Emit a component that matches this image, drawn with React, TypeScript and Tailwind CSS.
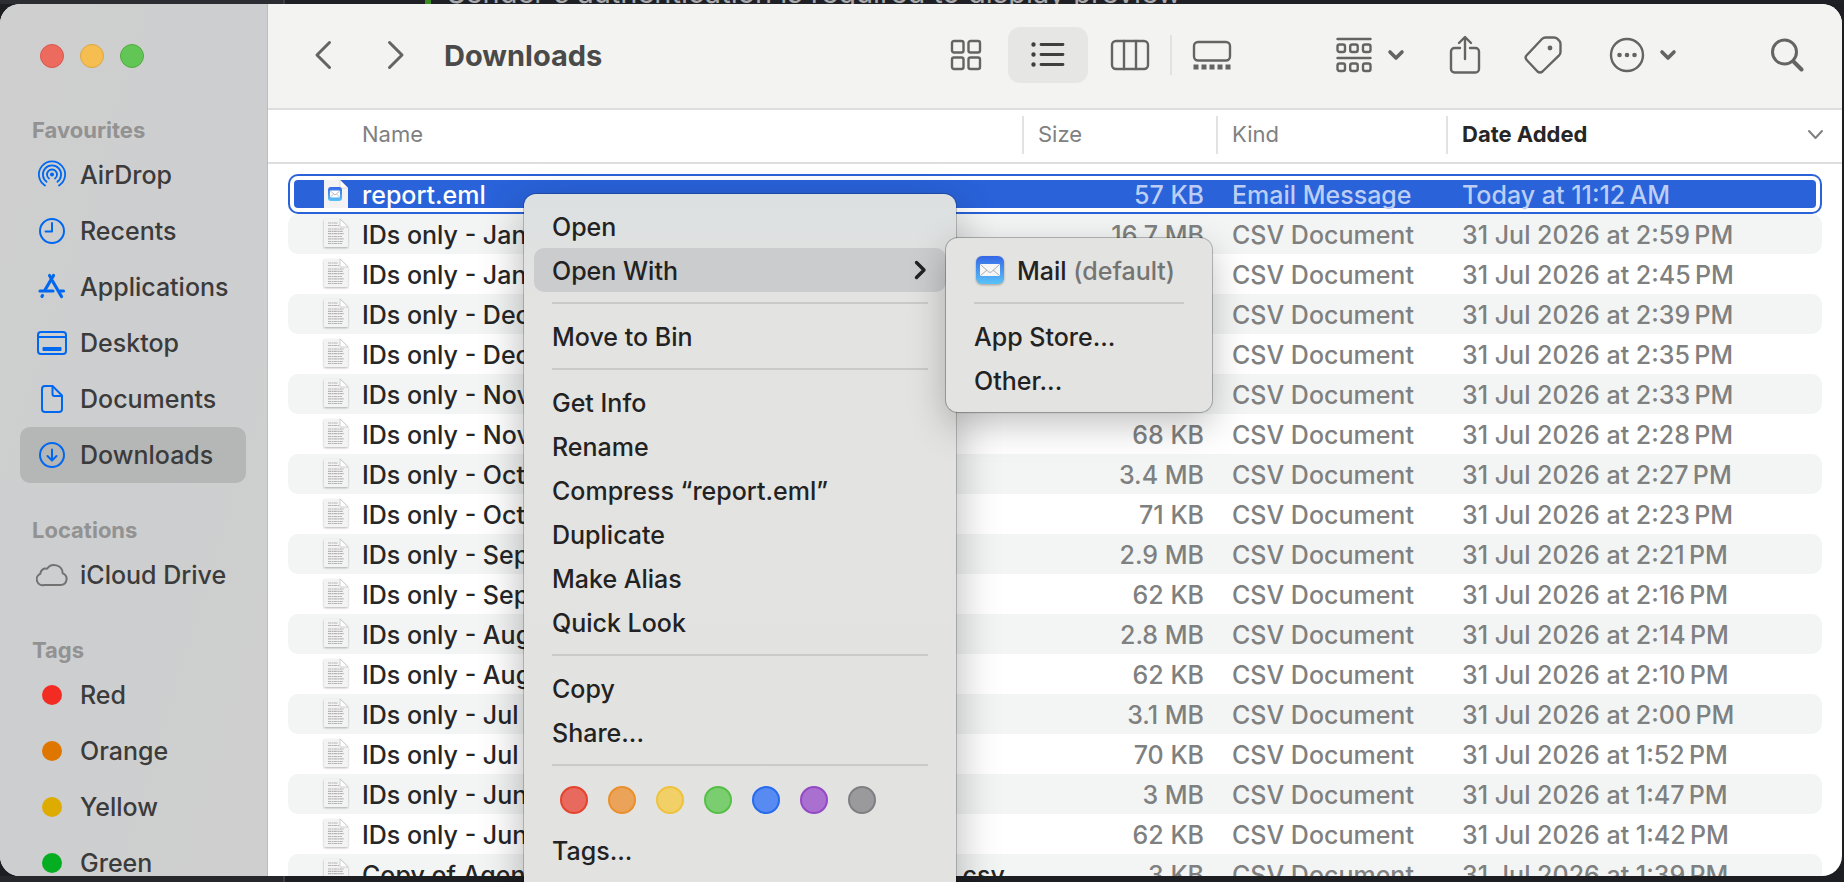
import { useState } from 'react';
import type { ReactNode } from 'react';
import clsx from 'clsx';

const CSV = 'CSV Document';

const files = [
  { name: 'report.eml', size: '57 KB', kind: 'Email Message', added: 'Today at 11:12\u202fAM' },
  { name: 'IDs only - Jan 2026.csv', size: '16.7 MB', kind: CSV, added: '31 Jul 2026 at 2:59\u202fPM' },
  { name: 'IDs only - Jan 2026 (1).csv', size: '74 KB', kind: CSV, added: '31 Jul 2026 at 2:45\u202fPM' },
  { name: 'IDs only - Dec 2025.csv', size: '3.6 MB', kind: CSV, added: '31 Jul 2026 at 2:39\u202fPM' },
  { name: 'IDs only - Dec 2025 (1).csv', size: '66 KB', kind: CSV, added: '31 Jul 2026 at 2:35\u202fPM' },
  { name: 'IDs only - Nov 2025.csv', size: '3.2 MB', kind: CSV, added: '31 Jul 2026 at 2:33\u202fPM' },
  { name: 'IDs only - Nov 2025 (1).csv', size: '68 KB', kind: CSV, added: '31 Jul 2026 at 2:28\u202fPM' },
  { name: 'IDs only - Oct 2025.csv', size: '3.4 MB', kind: CSV, added: '31 Jul 2026 at 2:27\u202fPM' },
  { name: 'IDs only - Oct 2025 (1).csv', size: '71 KB', kind: CSV, added: '31 Jul 2026 at 2:23\u202fPM' },
  { name: 'IDs only - Sep 2025.csv', size: '2.9 MB', kind: CSV, added: '31 Jul 2026 at 2:21\u202fPM' },
  { name: 'IDs only - Sep 2025 (1).csv', size: '62 KB', kind: CSV, added: '31 Jul 2026 at 2:16\u202fPM' },
  { name: 'IDs only - Aug 2025.csv', size: '2.8 MB', kind: CSV, added: '31 Jul 2026 at 2:14\u202fPM' },
  { name: 'IDs only - Aug 2025 (1).csv', size: '62 KB', kind: CSV, added: '31 Jul 2026 at 2:10\u202fPM' },
  { name: 'IDs only - Jul 2025.csv', size: '3.1 MB', kind: CSV, added: '31 Jul 2026 at 2:00\u202fPM' },
  { name: 'IDs only - Jul 2025 (1).csv', size: '70 KB', kind: CSV, added: '31 Jul 2026 at 1:52\u202fPM' },
  { name: 'IDs only - Jun 2025.csv', size: '3 MB', kind: CSV, added: '31 Jul 2026 at 1:47\u202fPM' },
  { name: 'IDs only - Jun 2025 (1).csv', size: '62 KB', kind: CSV, added: '31 Jul 2026 at 1:42\u202fPM' },
  { name: 'Copy of Agent performance report - July 2026 (1).csv', size: '3 KB', kind: CSV, added: '31 Jul 2026 at 1:39\u202fPM' },
];

const tagDots = [
  { name: 'Red', cls: 'bg-[#e8695d] border-[#e5432f]' },
  { name: 'Orange', cls: 'bg-[#eba35a] border-[#e98f2b]' },
  { name: 'Yellow', cls: 'bg-[#f1d067] border-[#eec23a]' },
  { name: 'Green', cls: 'bg-[#7ace70] border-[#56bf48]' },
  { name: 'Blue', cls: 'bg-[#588bf2] border-[#276af0]' },
  { name: 'Purple', cls: 'bg-[#aa70d0] border-[#9448c4]' },
  { name: 'Grey', cls: 'bg-[#9a9a9c] border-[#7f7f82]' },
];

function Icon({ w, h, sw = 2.4, children, className }: { w: number; h: number; sw?: number; children: ReactNode; className?: string }) {
  return (
    <svg
      width={w}
      height={h}
      viewBox={`0 0 ${w} ${h}`}
      fill="none"
      stroke="currentColor"
      strokeWidth={sw}
      strokeLinecap="round"
      strokeLinejoin="round"
      className={clsx('shrink-0', className)}
      aria-hidden="true"
    >
      {children}
    </svg>
  );
}

const AirDropIcon = () => (
  <Icon w={30} h={30} sw={1.8}>
    <circle cx="15" cy="14.5" r="2" fill="currentColor" stroke="none" />
    <path d="M12 18.5A5 5 0 1 1 18 18.5" />
    <path d="M9.6 21.8A9.1 9.1 0 1 1 20.4 21.8" />
    <path d="M8 25.6A13.1 13.1 0 1 1 22 25.6" />
  </Icon>
);

const RecentsIcon = () => (
  <Icon w={30} h={30} sw={2}>
    <circle cx="15" cy="15" r="12" />
    <path d="M15 7v8.5H8.5" />
  </Icon>
);

const ApplicationsIcon = () => (
  <Icon w={30} h={30} sw={3.2}>
    <path d="M16.5 3.5L8 18" />
    <path d="M12.5 3.5L14 6M15.5 9L24.5 24.5" />
    <path d="M3 19H16M23 19H26.5" />
    <path d="M5.5 23.5L5 24.3" />
  </Icon>
);

const DesktopIcon = () => (
  <Icon w={30} h={30} sw={2}>
    <rect x="1" y="4" width="28" height="22" rx="3" />
    <path d="M1 9h28" />
    <rect x="5.5" y="19" width="19" height="4" rx="1" fill="currentColor" stroke="none" />
  </Icon>
);

const DocumentsIcon = () => (
  <Icon w={30} h={30} sw={2}>
    <path d="M8 2h7.5L25 11.5V25a3 3 0 0 1-3 3H8a3 3 0 0 1-3-3V5a3 3 0 0 1 3-3z" />
    <path d="M15.5 2.5V10a2 2 0 0 0 2 2H25" />
  </Icon>
);

const DownloadsIcon = () => (
  <Icon w={30} h={30} sw={2}>
    <circle cx="15" cy="15" r="12" />
    <path d="M15 9.5V20M10.5 16l4.5 4.5 4.5-4.5" />
  </Icon>
);

const CloudIcon = () => (
  <Icon w={32} h={30} sw={2}>
    <path d="M8 25h16.5a6 6 0 0 0 2.2-11.6A8.6 8.6 0 0 0 11 8.8a5.2 5.2 0 0 0-6.6 5A5.9 5.9 0 0 0 8 25z" />
  </Icon>
);

function TextFileIcon() {
  return (
    <svg width="26" height="30" viewBox="0 0 26 30" className="shrink-0 drop-shadow-[0_1px_1px_rgba(0,0,0,0.3)]" aria-hidden="true">
      <path d="M2 0H17L25 8V27a1 1 0 0 1-1 1H2a1 1 0 0 1-1-1V1a1 1 0 0 1 1-1z" fill="#f3f3f3" />
      <path d="M17 0L25 8H18a1 1 0 0 1-1-1z" fill="#fff" stroke="#b5b5b5" strokeWidth="0.6" />
      <g stroke="#b4b4b4" strokeWidth="1.2" strokeDasharray="3 0.5 2 0.4">
        <path d="M5 4h10M5 6.5h11M5 10h16M5 12.3h15M5 14.6h16M5 17.5h14M5 19.8h16M5 22.5h15M5 24.5h14" />
      </g>
    </svg>
  );
}

function EmlFileIcon() {
  return (
    <svg width="26" height="28" viewBox="0 0 26 28" className="shrink-0" aria-hidden="true">
      <path d="M1 0H17L25 8V28H1z" fill="#f3f3f3" />
      <path d="M17 0L25 8H18a1 1 0 0 1-1-1z" fill="#fff" stroke="#c6c6c6" strokeWidth="0.6" />
      <rect x="5" y="7" width="14" height="14" rx="3" fill="url(#mailFill)" />
      <rect x="7" y="10.5" width="10" height="7" rx="0.8" fill="#fff" />
      <path d="M7.3 11l4.7 4 4.7-4M7.3 17.2l3.2-3.2M16.7 17.2l-3.2-3.2" fill="none" stroke="#9aa4ad" strokeWidth="0.7" />
    </svg>
  );
}

function MailIcon() {
  return (
    <svg width="30" height="30" viewBox="0 0 30 30" className="shrink-0 drop-shadow-[0_1px_1px_rgba(0,0,0,0.3)]" aria-hidden="true">
      <defs>
        <linearGradient id="mailFill" x1="0" y1="0" x2="0" y2="1">
          <stop offset="0" stopColor="#3567e6" />
          <stop offset="1" stopColor="#5ac3f8" />
        </linearGradient>
      </defs>
      <rect x="2" y="1" width="28" height="28" rx="6" fill="url(#mailFill)" />
      <rect x="6" y="9" width="20" height="12" rx="1" fill="#f6f6f6" />
      <path d="M6.5 9.5l8 7.3q1.5 1.2 3 0l8-7.3M6.5 20.5l6.5-5.5M25.5 20.5l-6.5-5.5" fill="none" stroke="#a9adb1" />
    </svg>
  );
}

function Chevron() {
  return (
    <Icon w={18} h={12} sw={3.6}>
      <path d="M3 3l6 6 6-6" />
    </Icon>
  );
}

const favourites = [
  { label: 'AirDrop', icon: <AirDropIcon /> },
  { label: 'Recents', icon: <RecentsIcon /> },
  { label: 'Applications', icon: <ApplicationsIcon /> },
  { label: 'Desktop', icon: <DesktopIcon /> },
  { label: 'Documents', icon: <DocumentsIcon /> },
  { label: 'Downloads', icon: <DownloadsIcon /> },
];

const sidebarTags = [
  { label: 'Red', cls: 'bg-[#f22c23]' },
  { label: 'Orange', cls: 'bg-[#de7600]' },
  { label: 'Yellow', cls: 'bg-[#deab00]' },
  { label: 'Green', cls: 'bg-[#05ad20]' },
];

function SidebarSection({ title, children }: { title: string; children: ReactNode }) {
  return (
    <section>
      <h2 className="h-[34px] pl-8 text-[22px] leading-[34px] font-bold text-[#929292]">{title}</h2>
      <ul>{children}</ul>
    </section>
  );
}

function SidebarItem({ label, icon, active, onClick }: { label: string; icon: ReactNode; active?: boolean; onClick?: () => void }) {
  return (
    <li className="pl-5 pr-[21px]">
      <button
        onClick={onClick}
        className={clsx('flex h-14 w-full items-center gap-3 rounded-[10px] pl-4 text-left text-[25px] text-[#3b3b3b]', active && 'bg-[#b5b6b6]')}
      >
        <span className="flex w-8 justify-center text-[#0068f0]">{icon}</span>
        <span className="pt-0.5">{label}</span>
      </button>
    </li>
  );
}

function Toolbar() {
  return (
    <header className="flex h-[106px] shrink-0 items-center border-b-2 border-[#dededd] bg-[#f3f3f1] pb-0.5 pl-[46px] pr-[38px] text-[#646463]">
      <button aria-label="Back">
        <Icon w={18} h={30} sw={3}>
          <path d="M15.5 2.5L3 15l12.5 12.5" />
        </Icon>
      </button>
      <button aria-label="Forward" className="ml-[55px]">
        <Icon w={18} h={30} sw={3}>
          <path d="M2.5 2.5L15 15 2.5 27.5" />
        </Icon>
      </button>
      <h1 className="ml-[39px] pt-px text-[29px] font-bold text-[#4a4a49]">Downloads</h1>

      <div className="ml-auto flex items-center">
        <div className="flex items-center gap-0.5">
          <button aria-label="Icon view" className="flex h-14 w-20 items-center justify-center">
            <Icon w={32} h={32}>
              <rect x="2" y="2" width="11.5" height="11.5" rx="2" />
              <rect x="18.5" y="2" width="11.5" height="11.5" rx="2" />
              <rect x="2" y="18.5" width="11.5" height="11.5" rx="2" />
              <rect x="18.5" y="18.5" width="11.5" height="11.5" rx="2" />
            </Icon>
          </button>
          <button aria-label="List view" aria-pressed="true" className="flex h-14 w-20 items-center justify-center rounded-[12px] bg-[#e6e6e4] text-[#3f3f3e]">
            <Icon w={34} h={30} sw={2.8}>
              <path d="M10 4.5h22M10 14.5h22M10 24.5h22" />
              <path d="M2.5 4.5h.01M2.5 14.5h.01M2.5 24.5h.01" strokeWidth="4.4" />
            </Icon>
          </button>
          <button aria-label="Column view" className="flex h-14 w-20 items-center justify-center">
            <Icon w={40} h={32}>
              <rect x="2" y="2" width="36" height="28" rx="4" />
              <path d="M14 2v28M26 2v28" />
            </Icon>
          </button>
        </div>
        <span className="h-10 w-0.5 bg-[#e2e2e0]" />
        <button aria-label="Gallery view" className="flex h-14 w-20 items-center justify-center">
          <Icon w={40} h={30}>
            <rect x="2" y="2" width="36" height="18.5" rx="4" />
            <path d="M1.5 27h38" strokeWidth="5" strokeLinecap="butt" strokeDasharray="5 3" />
          </Icon>
        </button>
      </div>

      <button aria-label="Group items" className="ml-[84px] flex items-center gap-[15px]">
        <Icon w={36} h={36}>
          <path d="M1.5 2h33M1.5 21h33" />
          <rect x="1.5" y="7.5" width="7.5" height="7.5" rx="2" />
          <rect x="14.2" y="7.5" width="7.5" height="7.5" rx="2" />
          <rect x="27" y="7.5" width="7.5" height="7.5" rx="2" />
          <rect x="1.5" y="26.5" width="7.5" height="7.5" rx="2" />
          <rect x="14.2" y="26.5" width="7.5" height="7.5" rx="2" />
          <rect x="27" y="26.5" width="7.5" height="7.5" rx="2" />
        </Icon>
        <Chevron />
      </button>
      <button aria-label="Share" className="ml-11">
        <Icon w={32} h={40}>
          <path d="M11 13H5.5A3.5 3.5 0 0 0 2 16.5V34a3.5 3.5 0 0 0 3.5 3.5h21A3.5 3.5 0 0 0 30 34V16.5a3.5 3.5 0 0 0-3.5-3.5H21" />
          <path d="M16 24V2.5M10 8l6-6 6 6" />
        </Icon>
      </button>
      <button aria-label="Tags" className="ml-[43px]">
        <Icon w={38} h={38}>
          <path d="M21.5 1.5h8.5q2 0 3.2 1.2l2.2 2.2q1.1 1.2 1.1 3v8q0 2-1.4 3.4L18.5 35.5q-2.5 2.2-5 0L2.7 24q-2.2-2.4 0-4.8L18 3q1.5-1.5 3.5-1.5z" />
          <circle cx="26" cy="12" r="2.4" fill="currentColor" stroke="none" />
        </Icon>
      </button>
      <button aria-label="More" className="ml-[47px] flex items-center gap-[14px]">
        <Icon w={36} h={36}>
          <circle cx="18" cy="18" r="16" />
          <path d="M10.5 18h.01M18 18h.01M25.5 18h.01" strokeWidth="4.6" />
        </Icon>
        <Chevron />
      </button>
      <button aria-label="Search" className="ml-[93px]">
        <Icon w={34} h={34} sw={3}>
          <circle cx="14.5" cy="14" r="12" />
          <path d="M23.5 23.5l8 8" strokeWidth="4" />
        </Icon>
      </button>
    </header>
  );
}

function ColumnHeader({ label, active }: { label: string; active?: boolean }) {
  return (
    <th className="border-b-2 border-[#dedede] p-0 pb-2 pt-1.5">
      <div
        className={clsx(
          'flex h-[38px] items-center justify-between border-l-2 border-[#e2e2e2] pb-0.5 pl-3.5 pr-[18px] text-[22px]',
          active ? 'font-bold text-[#262626]' : 'font-normal text-[#808080]'
        )}
      >
        {label}
        {active && (
          <Icon w={17} h={12} sw={2} className="text-[#808080]">
            <path d="M2 3l6.5 7L15 3" />
          </Icon>
        )}
      </div>
    </th>
  );
}

function Cell({ children, selected, striped, side, className }: { children: ReactNode; selected: boolean; striped: boolean; side?: 'left' | 'right'; className?: string }) {
  return (
    <td className={clsx('p-0', side === 'left' && 'pl-5', side === 'right' && 'pr-5')}>
      <div
        className={clsx(
          'h-10',
          side === 'left' && 'rounded-l-[10px]',
          side === 'right' && 'rounded-r-[10px]',
          striped && 'bg-[#f3f5f4]',
          selected && 'border-y-2 border-[#2962d9] py-1',
          selected && side === 'left' && 'border-l-2 pl-1',
          selected && side === 'right' && 'border-r-2 pr-1'
        )}
      >
        <div
          className={clsx(
            'flex items-center whitespace-nowrap leading-7',
            selected ? 'h-7 bg-[#2962d9]' : 'h-10',
            selected && side === 'left' && 'rounded-l-[4px]',
            selected && side === 'right' && 'rounded-r-[4px]',
            side === 'left' && (selected ? 'pl-[29px]' : 'pl-[35px]'),
            className
          )}
        >
          {children}
        </div>
      </div>
    </td>
  );
}

function FileTable() {
  const [selected, setSelected] = useState('report.eml');
  return (
    <div className="min-h-0 flex-1 overflow-hidden">
      <table className="w-full table-fixed border-separate border-spacing-0 text-left text-[25px] font-[450]">
        <colgroup>
          <col />
          <col className="w-[194px]" />
          <col className="w-[230px]" />
          <col className="w-[396px]" />
        </colgroup>
        <thead>
          <tr>
            <th className="border-b-2 border-[#dedede] p-0 pb-2.5 pl-[94px] pt-1.5 text-[22px] font-normal text-[#808080]">Name</th>
            <ColumnHeader label="Size" />
            <ColumnHeader label="Kind" />
            <ColumnHeader label="Date Added" active />
          </tr>
        </thead>
        <tbody>
          <tr aria-hidden="true">
            <td colSpan={4} className="h-2.5 p-0" />
          </tr>
          {files.map((file, i) => {
            const isSelected = file.name === selected;
            const props = { selected: isSelected, striped: i % 2 === 1 && !isSelected };
            const muted = isSelected ? 'text-[#bccef5]' : 'text-[#7f8080]';
            return (
              <tr key={file.name} onClick={() => setSelected(file.name)}>
                <Cell {...props} side="left" className={clsx('gap-[13px]', isSelected ? 'text-white' : 'text-[#262626]')}>
                  {file.kind === CSV ? <TextFileIcon /> : <EmlFileIcon />}
                  <span className="pt-0.5">{file.name}</span>
                </Cell>
                <Cell {...props} className={clsx('justify-end pr-3 pt-0.5', muted)}>{file.size}</Cell>
                <Cell {...props} className={clsx('pl-4 pt-0.5', muted)}>{file.kind}</Cell>
                <Cell {...props} side="right" className={clsx('pl-4 pt-0.5', muted)}>{file.added}</Cell>
              </tr>
            );
          })}
        </tbody>
      </table>
    </div>
  );
}

function MenuItem({ icon, children, active, submenu }: { icon?: ReactNode; children: ReactNode; active?: boolean; submenu?: boolean }) {
  return (
    <button
      role="menuitem"
      aria-haspopup={submenu ? 'menu' : undefined}
      className={clsx('flex h-11 w-full items-center gap-[13px] rounded-[10px] px-[18px] text-left text-[25px] text-[#222]', active && 'bg-[#cbccce]')}
    >
      {icon}
      <span className="whitespace-nowrap pt-[3px]">{children}</span>
      {submenu && (
        <Icon w={14} h={22} sw={3.4} className="ml-auto">
          <path d="M2.5 3.5L10 11l-7.5 7.5" />
        </Icon>
      )}
    </button>
  );
}

function MenuSeparator() {
  return <hr className="mx-[18px] my-2.5 border-t-2 border-[#cacac9]" />;
}

function ContextMenu() {
  return (
    <div
      role="menu"
      aria-label="File actions"
      className="absolute left-[524px] top-[194px] w-[432px] rounded-[12px] bg-linear-to-b from-[#dce0e1] via-[#e3e3e1] via-15% to-[#e2e2e1] px-2.5 pb-12 pt-2.5 shadow-[0_0_0_1px_rgba(0,0,0,0.2),0_16px_44px_rgba(0,0,0,0.3)]"
    >
      <MenuItem>Open</MenuItem>
      <MenuItem active submenu>Open With</MenuItem>
      <MenuSeparator />
      <MenuItem>Move to Bin</MenuItem>
      <MenuSeparator />
      <MenuItem>Get Info</MenuItem>
      <MenuItem>Rename</MenuItem>
      <MenuItem>Compress “report.eml”</MenuItem>
      <MenuItem>Duplicate</MenuItem>
      <MenuItem>Make Alias</MenuItem>
      <MenuItem>Quick Look</MenuItem>
      <MenuSeparator />
      <MenuItem>Copy</MenuItem>
      <MenuItem>Share...</MenuItem>
      <MenuSeparator />
      <div className="flex gap-5 pb-3.5 pl-[26px] pt-2.5">
        {tagDots.map((dot) => (
          <button key={dot.name} aria-label={dot.name} className={clsx('size-7 rounded-full border-2', dot.cls)} />
        ))}
      </div>
      <MenuItem>Tags...</MenuItem>
    </div>
  );
}

function OpenWithMenu() {
  return (
    <div
      role="menu"
      aria-label="Open With"
      className="absolute left-[946px] top-[238px] w-[266px] rounded-[12px] bg-[#e3e3e1] p-2.5 shadow-[0_0_0_1px_rgba(0,0,0,0.25),0_12px_36px_rgba(0,0,0,0.25)]"
    >
      <MenuItem icon={<MailIcon />}>
        Mail <span className="text-[#747473]">(default)</span>
      </MenuItem>
      <MenuSeparator />
      <MenuItem>App Store...</MenuItem>
      <MenuItem>Other...</MenuItem>
    </div>
  );
}

export default function App() {
  const [location, setLocation] = useState('Downloads');

  return (
    <div className="relative flex h-screen flex-col overflow-hidden bg-[#1d1e22] font-[Inter,'Liberation_Sans',sans-serif] font-[450]">
      {/* window behind, peeking out above */}
      <div className="flex h-1 shrink-0 items-end overflow-hidden bg-[#1f2026] text-[29px] font-normal text-[#a9a9ab]">
        <div className="h-1 w-[285px] border-r-2 border-[#3c3c42] bg-[#2c2c33]" />
        <div className="ml-[140px] h-1 w-1.5 bg-[#3b8a22]" />
        <p className="ml-4 h-6 whitespace-nowrap leading-[26px]">Sender's authentication is required to display preview</p>
      </div>

      <main className="mr-0.5 flex min-h-0 flex-1 overflow-hidden rounded-[20px] bg-white">
        <nav className="flex w-[268px] shrink-0 flex-col gap-[30px] overflow-hidden border-r border-[#bdbdbd] bg-linear-to-br from-[#cfcfcf] via-[#cdcecf] to-[#cfcfcf]">
          <div className="flex gap-4 pl-10 pt-10">
            <button aria-label="Close" className="size-6 rounded-full border border-[#d9574c] bg-[#ed6a5f]" />
            <button aria-label="Minimise" className="size-6 rounded-full border border-[#dca63f] bg-[#f6be50]" />
            <button aria-label="Zoom" className="size-6 rounded-full border border-[#53ab43] bg-[#62c656]" />
          </div>
          <div className="flex flex-col gap-[30px] pt-[15px]">
            <SidebarSection title="Favourites">
              {favourites.map((item) => (
                <SidebarItem key={item.label} {...item} active={location === item.label} onClick={() => setLocation(item.label)} />
              ))}
            </SidebarSection>
            <SidebarSection title="Locations">
              <SidebarItem label="iCloud Drive" icon={<span className="text-[#727272]"><CloudIcon /></span>} />
            </SidebarSection>
            <SidebarSection title="Tags">
              {sidebarTags.map((tag) => (
                <SidebarItem key={tag.label} label={tag.label} icon={<span className={clsx('size-5 rounded-full', tag.cls)} />} />
              ))}
            </SidebarSection>
          </div>
        </nav>
        <div className="flex min-w-0 flex-1 flex-col">
          <Toolbar />
          <FileTable />
        </div>
      </main>

      <div className="h-1.5 shrink-0">
        <div className="h-full w-[285px] border-r-2 border-[#3c3c42] bg-[#26272b]" />
      </div>

      <ContextMenu />
      <OpenWithMenu />
    </div>
  );
}
